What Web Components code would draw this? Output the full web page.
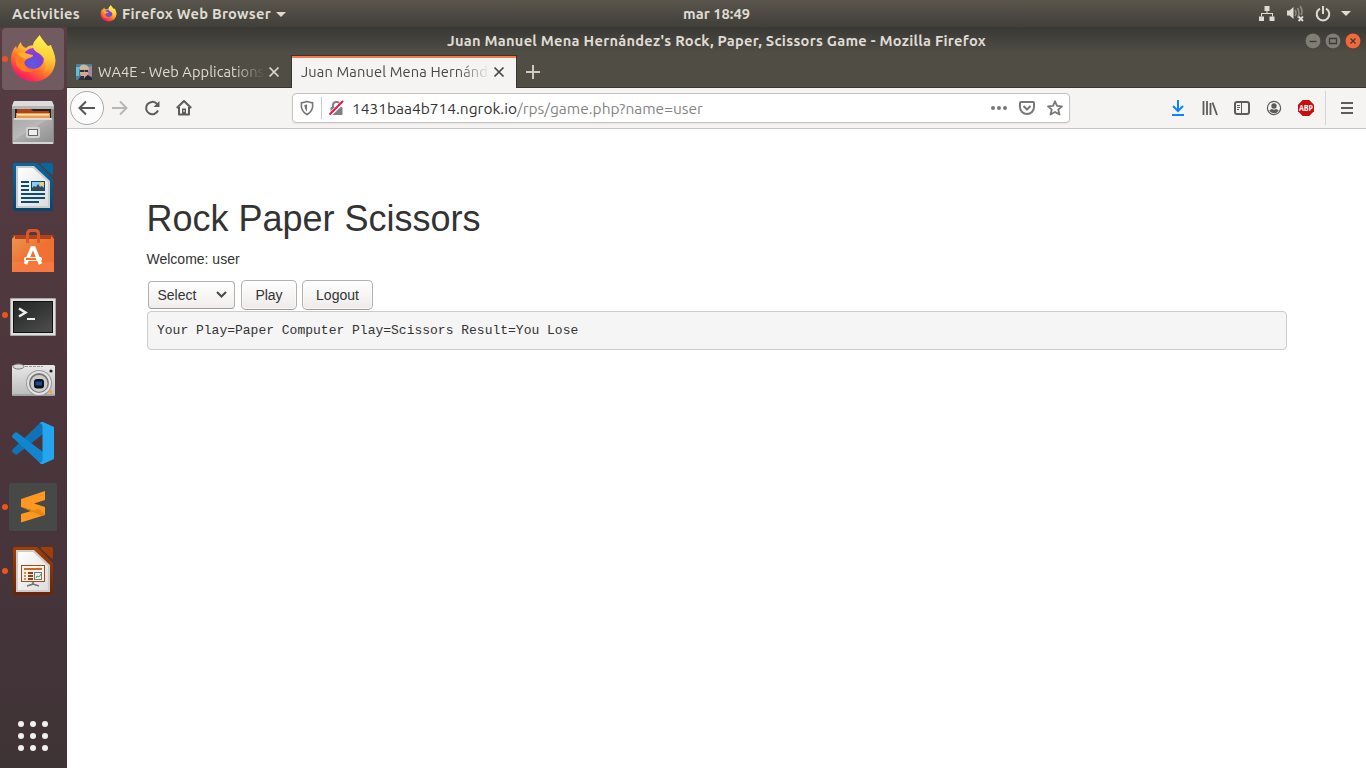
<!DOCTYPE html>
<html lang="en"><head><meta charset="utf-8"><title>Rock Paper Scissors</title>
<style>html,body{margin:0;height:100%;overflow:hidden;background:#fff}</style></head><body>
<desk-shell></desk-shell>
<script>
const UI='"Ubuntu","Noto Sans",sans-serif';
function define(name,css,html,after){
  customElements.define(name,class extends HTMLElement{
    constructor(){super();this.attachShadow({mode:'open'}).innerHTML='<style>*{box-sizing:border-box}svg{display:block;flex:none}'+css+'</style>'+html}
    connectedCallback(){if(after)after.call(this)}
  });
}
const fox=(p)=>`<svg viewBox="0 0 48 48" width="100%" height="100%"><defs>
<linearGradient id="${p}a" x1=".85" y1=".1" x2=".25" y2="1"><stop offset="0" stop-color="#fff44f"/><stop offset=".35" stop-color="#ffb02e"/><stop offset=".62" stop-color="#ff6a2b"/><stop offset=".85" stop-color="#ff2a55"/><stop offset="1" stop-color="#e31587"/></linearGradient>
<radialGradient id="${p}b" cx=".45" cy=".75" r=".8"><stop offset="0" stop-color="#5a5bea"/><stop offset=".55" stop-color="#7842d5"/><stop offset="1" stop-color="#b833e1"/></radialGradient>
<linearGradient id="${p}c" x1=".6" y1="0" x2=".5" y2="1"><stop offset="0" stop-color="#fff64f"/><stop offset=".6" stop-color="#ffce38"/><stop offset="1" stop-color="#ff8a28"/></linearGradient></defs>
<path d="M12 7C12 10 14 12 17 13C21 9 26 10 30 12L41 12C43 15 46 20 46.500 25C46 39 36 46.500 25 46.500C11 46.500 2 37 2 24C2 19 4 14 7 11L8 14C9 11 10 9 12 7Z" fill="url(#${p}a)"/>
<circle cx="24.500" cy="23.500" r="10.500" fill="url(#${p}b)"/>
<path d="M30.500 0C34 5 36 8 39 11L42 10C43 14 46 18 46 24C46 33 40 38 34 38C38 33 38 27 33 21C30 17 24 17 24 11C24 6 28 4 30.500 0Z" fill="url(#${p}c)"/>
<path d="M8 18C13 16 17 20 24 20C24 23 19 23 17 25C13 28 17 35 24 36C17 39 8 35 7 28C6 24 7 20 8 18Z" fill="#ff7b24"/>
<path d="M8 18C13 16 17 19 24 20C24 23 19 22 16 24.500C13 22 10 21 8 18Z" fill="#ffae2e"/></svg>`;
const doc=(p,c1,c2,inner)=>`<svg width="48" height="48" viewBox="0 0 48 48"><defs><linearGradient id="${p}" x2="0" y2="1"><stop stop-color="${c1}"/><stop offset="1" stop-color="${c2}"/></linearGradient><linearGradient id="${p}p" x2="1" y2="1"><stop stop-color="#fff"/><stop offset="1" stop-color="#ddd"/></linearGradient></defs>
<path d="M6 0H28L44 16V46Q44 48 42 48H6Q4 48 4 46V2Q4 0 6 0Z" fill="url(#${p})"/><path d="M33 0H42Q44 0 44 2V11Q43 12 42 11L32 2Q31 0 33 0Z" fill="${c1}"/><path d="M7 3H25L41 18V45H7Z" fill="#ccc"/><path d="M9 5H24L39 19V43H9Z" fill="url(#${p}p)"/>${inner}</svg>`;
const ICON={
firefox:fox('f'),
files:`<svg width="48" height="48" viewBox="0 0 48 48"><defs><linearGradient id="g" x2="1" y2="1"><stop stop-color="#aaa"/><stop offset=".45" stop-color="#b9b9b9"/><stop offset=".46" stop-color="#acacac"/><stop offset="1" stop-color="#8e8e8e"/></linearGradient></defs>
<path d="M5 2H43L45 7V44Q45 45 44 45H4Q3 45 3 44V7Z" fill="#888"/><path d="M5 2H43L45 7H3Z" fill="#dcdcdc"/><path d="M3 7H45V10H3Z" fill="#b5b5b5"/><path d="M6 10H42V20H6Z" fill="#222"/><path d="M8 10H22L24 12H40V14H8Z" fill="#a9441c"/><path d="M7 14H41V20H7Z" fill="#f39a3e"/><path d="M8 15H40V16.500H8Z" fill="#ffe9cd"/><path d="M5 19H43L44 22V44H4V22Z" fill="url(#g)"/><path d="M5 19H43V21H4.500Z" fill="#d9d9d9"/><path d="M4 43H44V45H4Z" fill="#d5d5d5"/><rect x="17" y="28" width="14" height="11" rx="2" fill="#d2d2d2"/><rect x="19.500" y="30.500" width="9" height="6" fill="#eee" stroke="#666"/></svg>`,
writer:doc('w','#0369a3','#0b456b',`<g fill="#0e4b73"><path d="M12 18H20V20H12ZM12 22H20V24H12ZM12 26H20V28H12ZM12 30H36V32H12ZM12 34H36V36H12ZM12 38H30V40H12ZM22 18H36V28H22Z"/></g><path d="M23 19H35V27H23Z" fill="#87d0f5"/><circle cx="33" cy="21" r="2" fill="#ffcf55"/><path d="M23 27V25L25 23L27 24L29 21L31 24L33 23L35 25V27Z" fill="#364954"/>`),
software:`<svg width="48" height="48" viewBox="0 0 48 48"><defs><linearGradient id="g" x2="1" y2="1"><stop stop-color="#e99852"/><stop offset=".5" stop-color="#ef7132"/><stop offset="1" stop-color="#f1702f"/></linearGradient></defs><path d="M4 8H44L45 12V18H3V12Z" fill="#b4401c"/><path d="M3 12L6 9V12H42V9L45 12V45H3Z" fill="url(#g)"/><path d="M3 35H45V45H3Z" fill="#ff8a5b" opacity=".35"/><path d="M18.500 16V7Q18.500 3.500 21.500 3.500H26.500Q29.500 3.500 29.500 7V16" fill="none" stroke="#d9572d" stroke-width="3"/><path d="M16.500 37L23 21H25L31.500 37" fill="none" stroke="#fff" stroke-width="3.600"/><rect x="15" y="30" width="18" height="4" rx="1.500" fill="#fff"/><path d="M17 31H27V33H17Z" fill="#ed762f"/></svg>`,
terminal:`<svg width="48" height="48" viewBox="0 0 48 48"><defs><linearGradient id="g" x2=".7" y2="1"><stop stop-color="#252626"/><stop offset=".5" stop-color="#343535"/><stop offset="1" stop-color="#4a4a4a"/></linearGradient></defs><rect x="1" y="7" width="46" height="38" rx="1" fill="#a7a7a7"/><rect x="2" y="8" width="44" height="36" fill="#dedede"/><rect x="4.500" y="10.500" width="39" height="31" fill="url(#g)" stroke="#111"/><path d="M10 17.500L16.500 21.500L10 25.500" fill="none" stroke="#eee" stroke-width="2.500"/><path d="M18 28H26" stroke="#eee" stroke-width="2"/></svg>`,
camera:`<svg width="48" height="48" viewBox="0 0 48 48"><defs><linearGradient id="g" x2="0" y2="1"><stop stop-color="#e8e8e8"/><stop offset="1" stop-color="#bbb"/></linearGradient></defs><rect x="3" y="10" width="43" height="31" rx="1.500" fill="url(#g)"/><path d="M4 40H45" stroke="#888"/><ellipse cx="9.500" cy="11.500" rx="5.500" ry="2.500" fill="#ddd" stroke="#777"/><path d="M16 11.500H34" stroke="#999" stroke-dasharray="3 1"/><circle cx="42" cy="16" r="1.600" fill="#222"/><circle cx="30" cy="28" r="13" fill="#999"/><circle cx="30" cy="28" r="12" fill="#e4e4e4"/><circle cx="30" cy="28" r="10" fill="#777"/><circle cx="30" cy="28.500" r="8.500" fill="#ccc"/><rect x="25" y="24" width="10" height="9.500" rx="3" fill="#111"/><path d="M26.500 26.500H33V30.500H26.500Z" fill="#174b9c"/><path d="M40 35H43V38H40Z" fill="#f2a43b"/></svg>`,
code:`<svg width="48" height="48" viewBox="0 0 48 48"><path d="M3 31L31 4L34 3V15L8 35.500Q7 36 6 35.200L3 32.500Z" fill="#1073b8"/><path d="M3 16.500L6 13.500Q7 13 8 13.500L34 33V45L31 44L3 18Z" fill="#1285cf"/><path d="M34 3L45 8V40L34 45Q31.500 45.500 30.500 43.500Q33.500 44 33.500 41V7Q33.500 4 30.500 4.500Q31.500 2.500 34 3Z" fill="#24a5f0"/></svg>`,
sublime:`<svg width="48" height="48" viewBox="0 0 48 48"><rect width="48" height="48" rx="2.500" fill="#474949"/><path d="M36 8V17L25 20.500L36 24V32L12 39.500V31L24 27.500L12 24V16Z" fill="#ff9820"/><path d="M12 24L24 27.500L30 26L36 31.500L33 33Z" fill="#e8860f"/></svg>`,
impress:doc('i','#a33e03','#6a2505',`<path d="M12 18H36V35H12Z" fill="#a94917"/><path d="M13 19H35V34H13Z" fill="#fff3e9"/><path d="M15 21H33V23H15Z" fill="#cb672d"/><path d="M15 25H17V27H15ZM15 28H17V30H15ZM15 31H17V33H15Z" fill="#e9864b"/><path d="M19 25H24V27H19ZM19 28H24V30H19ZM19 31H24V33H19Z" fill="#9b3c13"/><rect x="25.500" y="25.500" width="7" height="7" fill="#eee" stroke="#777"/><path d="M27 31L28 29L30 30L32 27" stroke="#31a354" fill="none"/><path d="M24 35V37L18 39M24 37L30 39" fill="none" stroke="#777" stroke-width="1.800"/>`)};
// Text run that is spaced out to the width it is given.
define('ui-text',':host{display:inline-block;white-space:pre;line-height:20px}span{display:inline-block}','<span><slot></slot></span>',function(){
  const s=this.shadowRoot.querySelector('span'),w=+this.getAttribute('fit');
  if(w){const n=[...this.textContent].length;s.style.letterSpacing=((w-s.getBoundingClientRect().width)/n)+'px'}
});
define('top-bar',`:host{display:grid;grid-template-columns:1fr auto 1fr;align-items:center;height:27px;background:linear-gradient(#5a564d,#403f39);font:bold 14.667px ${UI};color:#dfdbd2;padding:0 14px 0 12px}
.l,.r{display:flex;align-items:center}.fx{width:17px;height:17px;margin:0 5px 1px 20px}.c{margin-left:69px}.r{justify-content:flex-end}.d{margin-left:5px}.l .d{margin-top:1px}.r .d{margin-right:1px}`,
`<div class="l"><ui-text fit="68">Activities</ui-text><div class="fx">${fox('t')}</div><ui-text fit="149">Firefox Web Browser</ui-text><svg class="d" width="10" height="5"><path d="M0 0H10L5 5Z" fill="#dfdbd2"/></svg></div>
<ui-text class="c" fit="67">mar 18:49</ui-text>
<div class="r"><svg width="16" height="16" style="margin-right:12px"><g fill="#dfdbd2"><path d="M5.500 0H10.500V5H5.500ZM0 10.500H5V15H0ZM10.500 10.500H15.500V15H10.500Z"/><path d="M2 7H14V10.500H13V8H3V10.500H2ZM7.500 5H8.500V7H7.500Z"/></g></svg>
<svg width="17" height="17" viewBox="0 0 17 17" style="margin-right:11px"><path d="M0 5.500H2.500L6.500 2V14L2.500 10.500H0Z" fill="#dfdbd2"/><path d="M8 5Q10 8 8 11M10.500 3Q13.500 8 10.500 13M13 1Q16.500 6 14 10" stroke="#8d8981" stroke-width="1.600" fill="none"/><path d="M11.500 11.500L16 16M16 11.500L11.500 16" stroke="#dfdbd2" stroke-width="1.800"/></svg>
<svg width="16" height="16" viewBox="0 0 16 16" style="margin-right:5px"><path d="M5 2.600A6.300 6.300 0 1 0 11 2.600M8 0V8" stroke="#dfdbd2" stroke-width="2" fill="none"/></svg><svg class="d" width="10" height="5"><path d="M0 0H10L5 5Z" fill="#dfdbd2"/></svg></div>`);
define('dock-item',`:host{display:flex;align-items:center;height:64px;position:relative}.t{width:62px;height:62px;margin-left:2px;display:flex;align-items:center;justify-content:center;border-radius:4px}:host([active]) .t{background:#725b60}.i{width:48px;height:48px}
:host([running])::before{content:"";position:absolute;left:2px;top:29px;width:6px;height:6px;border-radius:50%;background:#e95420}`,'<div class="t"><div class="i"></div></div>',function(){this.shadowRoot.querySelector('.i').innerHTML=ICON[this.getAttribute('icon')]});
define('app-dock',`:host{display:flex;flex-direction:column;width:67px;background:linear-gradient(#563d43,#4b353b 55%,#43343a 85%,#3e3334)}svg{margin:auto 0 16px 17px}`,
['firefox" running active x="','files','writer','software','terminal" running x="','camera','code','sublime" running x="','impress" running x="'].map(i=>`<dock-item icon="${i}"></dock-item>`).join('')+
`<svg width="32" height="32"><g fill="#f2f1f0">${[4,16,28].map(y=>[4,16,28].map(x=>`<circle cx="${x}" cy="${y}" r="3"/>`).join('')).join('')}</g></svg>`);
define('title-bar',`:host{display:grid;grid-template-columns:1fr auto 1fr;align-items:center;height:28px;font:bold 14.667px ${UI};color:#dfdbd2;padding-right:5px}.b{display:flex;gap:4px;justify-content:flex-end}ui-text{margin-right:-5px}`,
`<span></span><ui-text fit="539">Juan Manuel Mena Hernández's Rock, Paper, Scissors Game - Mozilla Firefox</ui-text><div class="b">
${['M4.500 8.500H11.500','M4.500 5.500H11.500V10.500H4.500Z','M5.500 5.500L10.500 10.500M10.500 5.500L5.500 10.500'].map((d,i)=>`<svg width="16" height="16"><circle cx="8" cy="8" r="7.800" fill="${i==2?'#f06a3c':'#807d75'}" stroke="#35342f" stroke-width=".5"/><path d="${d}" stroke="#3c3b37" stroke-width="1.300" fill="none"/></svg>`).join('')}</div>`);
define('browser-tab',`:host{display:flex;align-items:center;width:224px;height:33px;padding:0 11px 0 9px;color:#dfdbd2;font:14.667px ${UI}}:host([active]){background:linear-gradient(#f5794c 0 2px,#f5f4f2 2px);color:#474747;border:solid #36352f;border-width:1px 1px 0;width:226px}
.t{flex:1;overflow:hidden;height:20px;-webkit-mask:linear-gradient(90deg,#000 calc(100% - 32px),transparent)}svg{margin-left:3px}`,
`<slot name="icon"></slot><div class="t"><slot></slot></div><svg width="12" height="12"><path d="M1.500 1.500L10.500 10.500M10.500 1.500L1.500 10.500" stroke="currentColor" stroke-width="1.700"/></svg>`);
define('tab-strip',`:host{display:flex;height:33px;align-items:stretch;box-shadow:inset 0 -1px #36352f}.p{align-self:center;margin-left:9px}.f{margin-right:6px}`,
`<browser-tab><svg slot="icon" class="f" width="16" height="16"><path d="M0 0H16V16H0Z" fill="#4b8196"/><path d="M0 3H3V12H0Z" fill="#61bedb"/><path d="M11 3L16 2V12H12Z" fill="#a687a0"/><path d="M3 4Q5-1 10 1Q13 2 13 6H4Z" fill="#c6b9a6"/><path d="M4 5H12V10L10 14H6L4 10Z" fill="#d5a58c"/><path d="M4 6H8V8H4ZM8.500 6H12V8H8.500ZM5 12H8V16H2Z" fill="#30303a"/><path d="M9 13L12 11L16 14V16H8Z" fill="#222936"/></svg><ui-text fit="166">WA4E - Web Applications</ui-text></browser-tab>
<browser-tab active><ui-text fit="187">Juan Manuel Mena Hernánd</ui-text></browser-tab><svg class="p" width="14" height="14"><path d="M7 0V14M0 7H14" stroke="#cfcbc3" stroke-width="2"/></svg>`);
define('nav-bar',`:host{display:grid;grid-template-columns:225px 778px 1fr;align-items:center;height:41px;background:#f5f4f2;border-bottom:1px solid #c9c7c5;color:#5c5c5c;font:15.500px ${UI}}
.n{display:flex;align-items:center;gap:16px;padding-left:3px}.back{width:34px;height:34px;border:1px solid #aaa;border-radius:50%;background:#fcfcfc;display:grid;place-items:center;margin-right:-8px}
.u{display:flex;align-items:center;height:30px;background:#fff;border:1px solid #c5c3c1;border-radius:4px;box-shadow:0 1px 2px #0001;padding:0 6px 0 7px}.s{width:1px;height:22px;background:#ccc;margin:0 7px 0 6px}ui-text{padding-top:1px}.a{color:#333;margin-left:8px}.p{color:#858585}.e{margin-left:auto;display:flex;gap:12px}
.r{display:flex;align-items:center;justify-content:flex-end;gap:16px;padding-right:11px;align-self:stretch}.v{width:1px;height:34px;background:#d6d4d2;margin:0 -3px 0 -5px}`,
`<div class="n"><div class="back"><svg width="18" height="16"><path d="M17 8H2M8 1.500L1.500 8L8 14.500" fill="none" stroke="#555" stroke-width="2"/></svg></div>
<svg width="16" height="16"><path d="M0 8H14M8 1.500L14.500 8L8 14.500" fill="none" stroke="#b9b7b5" stroke-width="2"/></svg>
<svg width="16" height="16"><path d="M14 10.500A6.200 6.200 0 1 1 12.500 3.500L14 5" fill="none" stroke="#5c5c5c" stroke-width="2"/><path d="M15.500 1V7H9.500Z" fill="#5c5c5c"/></svg>
<svg width="16" height="16"><path d="M.8 8L8 1L15.200 8M3 7V14.500H13V7" fill="none" stroke="#5c5c5c" stroke-width="2" stroke-linejoin="round"/><path d="M6 8.500H10V14H6Z" fill="#5c5c5c"/><path d="M7.500 10H8.500V12H7.500Z" fill="#fff"/></svg></div>
<div class="u"><svg width="14" height="16" viewBox="0 0 15 16"><path d="M1.500 2.500Q5 2 7.500 1Q10 2 13.500 2.500V7Q12.500 12 7.500 15Q2.500 12 1.500 7Z" fill="none" stroke="#777" stroke-width="1.700"/><path d="M7.500 4V12Q5 9 4.500 5Z" fill="#777"/></svg><i class="s" style="margin-left:7px"></i>
<svg width="15" height="16" viewBox="0 0 15 16"><path d="M4 8V5Q4 2 7.500 2Q11 2 11 5V8" fill="none" stroke="#808080" stroke-width="2"/><rect x="1.500" y="7" width="12" height="8" rx="1" fill="#808080"/><path d="M0 15.500L14.500 1.500" stroke="#fff" stroke-width="4"/><path d="M.5 14.500L14 1" stroke="#ff0039" stroke-width="1.800"/></svg>
<ui-text class="a" fit="165">1431baa4b714.ngrok.io</ui-text><ui-text class="p" fit="186">/rps/game.php?name=user</ui-text>
<div class="e"><svg width="16" height="16"><g fill="#777"><circle cx="2" cy="8" r="2"/><circle cx="8" cy="8" r="2"/><circle cx="14" cy="8" r="2"/></g></svg><svg width="16" height="16"><path d="M2 2H14Q15 2 15 3V7A7 7 0 0 1 1 7V3Q1 2 2 2Z" fill="none" stroke="#777" stroke-width="2"/><path d="M4.500 6L8 9.500L11.500 6" fill="none" stroke="#777" stroke-width="2"/></svg><svg width="16" height="16"><path d="M8 1.300L10 5.800L15 6.300L11.200 9.600L12.500 14.500L8 12L3.500 14.500L4.800 9.600L1 6.300L6 5.800Z" fill="none" stroke="#777" stroke-width="1.800" stroke-linejoin="round"/></svg></div></div>
<div class="r"><svg width="16" height="16"><path d="M8 0V11M3 6L8 11L13 6M2 15H14" fill="none" stroke="#0a84ff" stroke-width="2"/></svg>
<svg width="16" height="16"><path d="M1.500 1V15M5 1V15M8.500 3V15M10.500 2.500L15 15" fill="none" stroke="#5c5c5c" stroke-width="1.800"/></svg>
<svg width="16" height="16"><rect x="1" y="2" width="14" height="12" rx="2" fill="none" stroke="#5c5c5c" stroke-width="2"/><path d="M7.500 2V14M3 5.500H6M3 7.500H6M3 9.500H5" stroke="#5c5c5c"/></svg>
<svg width="16" height="16"><circle cx="8" cy="8" r="6.600" fill="none" stroke="#5c5c5c" stroke-width="1.200"/><circle cx="8" cy="6" r="2.700" fill="#5c5c5c"/><path d="M3.300 10.500Q4.500 9 6 9Q8 10.500 10 9Q11.500 9 12.700 10.500Q11 13.300 8 13.300Q5 13.300 3.300 10.500Z" fill="#5c5c5c"/></svg>
<svg width="16" height="16" viewBox="0 0 17 17"><path d="M5 0H12L17 5V12L12 17H5L0 12V5Z" fill="#c70d0d"/><text x="1" y="11.500" font-family="Open Sans,sans-serif" font-weight="700" font-size="8.500" textLength="15" lengthAdjust="spacingAndGlyphs" fill="#fff">ABP</text></svg><i class="v"></i>
<svg width="16" height="16" viewBox="0 0 16 16"><path d="M2 3H14M2 8H14M2 13H14" stroke="#5c5c5c" stroke-width="2"/></svg></div>`);
define('form-button',`:host{display:inline-flex;align-items:center;justify-content:center;height:30px;width:var(--w);border:1px solid #b2afac;border-bottom-color:#9c9a97;border-radius:5px;background:linear-gradient(#fff,#edebea);box-shadow:inset 0 0 0 1px #fff8}`,'<slot></slot>');
define('choice-box',`:host{display:flex;align-items:center;justify-content:space-between;width:87px;height:28px;padding:0 7.500px 0 8.500px;border:1px solid #b2afac;border-bottom-color:#9c9a97;border-radius:4px;background:linear-gradient(#fff,#f0eeed)}`,'<slot></slot><svg width="11" height="7"><path d="M1 1L5.500 5.500L10 1" stroke="#484848" stroke-width="2" fill="none"/></svg>');
define('game-page',`:host{display:block;flex:1;background:#fff;padding:70.400px 79px 0 79.500px;font:14px/20px "Liberation Sans",Arial,sans-serif;color:#333}h1{font-size:36px;line-height:39.600px;font-weight:500;margin:0 0 10px}p{margin:0 0 10px}.f{display:flex;align-items:center;gap:5px;height:32px;padding:0 0 0 1.500px}choice-box{margin-right:1px}
pre{margin:0 0 0 .5px;width:1140px;height:39px;padding:10.200px 9px 0;border:1px solid #ccc;border-radius:4px;background:#f5f5f5;font:13px/18.570px "Liberation Mono",monospace}`,
`<h1>Rock Paper Scissors</h1><p>Welcome: user</p><div class="f"><choice-box>Select</choice-box><form-button style="--w:56px">Play</form-button><form-button style="--w:71px">Logout</form-button></div><pre>Your Play=Paper Computer Play=Scissors Result=You Lose</pre>`);
define('browser-window',`:host{display:flex;flex-direction:column;flex:1;min-width:0;background:linear-gradient(#393834,#504d45 26px,#504d45)}`,'<title-bar></title-bar><tab-strip></tab-strip><nav-bar></nav-bar><game-page></game-page>');
define('desk-shell',':host{display:flex;flex-direction:column;width:1366px;height:768px;overflow:hidden}.m{display:flex;flex:1;min-height:0}','<top-bar></top-bar><div class="m"><app-dock></app-dock><browser-window></browser-window></div>');
</script></body></html>
